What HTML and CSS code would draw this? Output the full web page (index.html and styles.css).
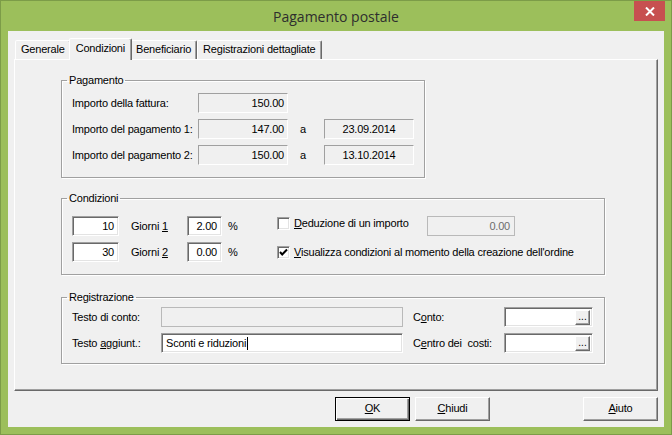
FILE: index.html
```html
<!DOCTYPE html>
<html lang="it">
<head>
<meta charset="utf-8">
<title>Pagamento postale</title>
<link rel="stylesheet" href="styles.css">
</head>
<body>
<div class="window">
  <div class="titlebar">
    <span class="title">Pagamento postale</span>
    <div class="close">
      <svg width="10" height="9" viewBox="0 0 10 9"><path d="M1 0.5 L9 8.5 M9 0.5 L1 8.5" stroke="#fff" stroke-width="2" fill="none"/></svg>
    </div>
  </div>
  <div class="client">
    <div class="tabs">
      <div class="tab">Generale</div>
      <div class="tab active">Condizioni</div>
      <div class="tab">Beneficiario</div>
      <div class="tab">Registrazioni dettagliate</div>
    </div>
    <div class="panel">
      <fieldset class="group g-pay">
        <legend>Pagamento</legend>
        <div class="body pay-body">
          <div class="row">
            <span class="lbl pay-lbl">Importo della fattura:</span>
            <span class="ro num">150.00</span>
          </div>
          <div class="row">
            <span class="lbl pay-lbl">Importo del pagamento 1:</span>
            <span class="ro num">147.00</span>
            <span class="a">a</span>
            <span class="ro date">23.09.2014</span>
          </div>
          <div class="row">
            <span class="lbl pay-lbl">Importo del pagamento 2:</span>
            <span class="ro num">150.00</span>
            <span class="a">a</span>
            <span class="ro date">13.10.2014</span>
          </div>
        </div>
      </fieldset>

      <fieldset class="group g-cond">
        <legend>Condizioni</legend>
        <div class="body cond-body">
          <div class="row">
            <span class="edit days">10</span>
            <span class="lbl giorni">Giorni <u>1</u></span>
            <span class="edit pct">2.00</span>
            <span class="lbl pctsign">%</span>
            <span class="chk chk-top"></span>
            <span class="lbl chk-lbl ded"><u>D</u>eduzione di un importo</span>
            <span class="dis dedval">0.00</span>
          </div>
          <div class="row">
            <span class="edit days">30</span>
            <span class="lbl giorni">Giorni <u>2</u></span>
            <span class="edit pct">0.00</span>
            <span class="lbl pctsign">%</span>
            <span class="chk checked">
              <svg width="9" height="9" viewBox="0 0 9 9"><path d="M1 4 L3.2 6.5 L8 1.5" stroke="#000" stroke-width="2" fill="none"/></svg>
            </span>
            <span class="lbl chk-lbl"><u>V</u>isualizza condizioni al momento della creazione dell'ordine</span>
          </div>
        </div>
      </fieldset>

      <fieldset class="group g-reg">
        <legend>Registrazione</legend>
        <div class="body reg-body">
          <div class="row">
            <span class="lbl reg-lbl">Testo di conto:</span>
            <span class="dis txt"></span>
            <span class="lbl reg-lbl2">C<u>o</u>nto:</span>
            <span class="edit pick"><span class="dots">...</span></span>
          </div>
          <div class="row">
            <span class="lbl reg-lbl">Testo <u>a</u>ggiunt.:</span>
            <span class="edit txt left">Sconti e riduzioni<span class="caret"></span></span>
            <span class="lbl reg-lbl2">C<u>e</u>ntro dei&nbsp; costi:</span>
            <span class="edit pick"><span class="dots">...</span></span>
          </div>
        </div>
      </fieldset>
    </div>
    <div class="buttons">
      <div class="btn default"><u>O</u>K</div>
      <div class="btn gap"><u>C</u>hiudi</div>
      <div class="btn"><u>A</u>iuto</div>
    </div>
  </div>
</div>
</body>
</html>
```

FILE: styles.css
```css
* { box-sizing: border-box; }

body {
  margin: 0;
  background: #ffffff;
  font-family: "Liberation Sans", Arial, sans-serif;
  font-size: 11px;
  letter-spacing: -0.2px;
  color: #000;
}

.window {
  width: 672px;
  height: 435px;
  border: 1px solid #7c9c48;
  background: #9cbf5b;
  display: flex;
  flex-direction: column;
}

.titlebar {
  height: 30px;
  position: relative;
  display: flex;
  align-items: center;
  justify-content: center;
}

.title {
  font-family: "Open Sans", "Noto Sans", sans-serif;
  font-size: 14px;
  letter-spacing: 0;
  color: #2e2e2e;
}

.close {
  position: absolute;
  top: 0;
  right: 6px;
  width: 31px;
  height: 20px;
  background: #c75050;
  display: flex;
  align-items: center;
  justify-content: center;
}

.client {
  flex: 1;
  margin: 0 7px 7px;
  background: #f0f0f0;
  padding: 7px 6px 0;
  display: flex;
  flex-direction: column;
}

/* tabs */
.tabs {
  height: 21px;
  display: flex;
  align-items: flex-end;
  padding-left: 1px;
  position: relative;
  z-index: 1;
}

.tab {
  height: 19px;
  padding: 0 5px;
  line-height: 17px;
  border: 1px solid;
  border-bottom: 0;
  border-color: #fff #696969 transparent #fff;
  border-radius: 2px 2px 0 0;
  box-shadow: inset -1px 0 #a0a0a0;
  background: #f0f0f0;
  white-space: nowrap;
}

.tab.active {
  height: 22px;
  margin: 0 -2px -1px;
  padding: 0 6px;
  line-height: 18px;
  position: relative;
  z-index: 2;
}

.panel {
  height: 332px;
  border: 1px solid;
  border-color: #fff #696969 #696969 #fff;
  box-shadow: inset -1px -1px #a0a0a0;
  padding: 14px 0 0 46px;
}

/* group boxes */
.group {
  margin: 0;
  padding: 0;
  border: 1px solid #a0a0a0;
  box-shadow: inset 1px 1px #fff, 1px 1px #fff;
  min-width: 0;
}

.group legend {
  margin-left: 5px;
  padding: 0 2px;
  line-height: 13px;
}

.g-pay { width: 364px; }
.g-cond { width: 544px; margin-top: 14px; }
.g-reg { width: 544px; margin-top: 16px; }

.body {
  display: flex;
  flex-direction: column;
  padding-left: 10px;
}

.pay-body { padding-top: 6px; padding-bottom: 12px; gap: 6px; }
.cond-body { padding-top: 11px; padding-bottom: 12px; gap: 6px; }
.reg-body { padding-top: 3px; padding-bottom: 10px; gap: 6px; }

.row {
  display: flex;
  align-items: center;
  height: 20px;
  white-space: nowrap;
}

.lbl { line-height: 13px; }

/* Pagamento */
.pay-lbl { width: 126px; }

.ro {
  height: 20px;
  width: 90px;
  line-height: 18px;
  border: 1px solid;
  border-color: #a0a0a0 #fff #fff #a0a0a0;
}

.num { text-align: right; padding-right: 3px; }
.date { text-align: center; }

.a { width: 36px; padding-left: 12px; }

/* edits */
.edit {
  height: 20px;
  line-height: 16px;
  background: #fff;
  border: 1px solid;
  border-color: #a0a0a0 #fff #fff #a0a0a0;
  box-shadow: inset 1px 1px #696969, inset -1px -1px #e3e3e3;
  text-align: right;
  padding: 1px 4px 0;
  position: relative;
}

.days { width: 47px; }
.giorni { width: 68px; padding-left: 12px; }
.pct { width: 35px; }
.pctsign { width: 55px; padding-left: 6px; }

.chk {
  width: 13px;
  height: 13px;
  flex: none;
  background: #fff;
  border: 1px solid;
  border-color: #a0a0a0 #fff #fff #a0a0a0;
  box-shadow: inset 1px 1px #696969, inset -1px -1px #e3e3e3;
  display: flex;
  align-items: center;
  justify-content: center;
}

.chk-top { align-self: flex-start; margin-top: 1px; }

.chk-lbl { padding-left: 4px; }
.ded { width: 137px; align-self: flex-start; margin-top: 1px; }

.dis {
  height: 20px;
  line-height: 18px;
  border: 1px solid #b9b9b9;
  background: #f0f0f0;
  color: #6d6d6d;
}

.dedval { width: 88px; text-align: right; padding-right: 4px; }

/* Registrazione */
.reg-lbl { width: 89px; }
.txt { width: 242px; }
.left { text-align: left; padding-left: 4px; }
.reg-lbl2 { width: 101px; padding-left: 10px; }
.pick { width: 89px; padding: 0; }

.dots {
  position: absolute;
  right: 2px;
  top: 2px;
  width: 15px;
  height: 15px;
  background: #f0f0f0;
  border: 1px solid;
  border-color: #fff #696969 #696969 #fff;
  box-shadow: inset -1px -1px #a0a0a0;
  font-size: 10px;
  line-height: 11px;
  text-align: center;
  letter-spacing: 0;
  color: #000;
}

.caret {
  display: inline-block;
  width: 1px;
  height: 13px;
  background: #000;
  vertical-align: -3px;
  margin-left: 1px;
}

/* buttons */
.buttons {
  display: flex;
  justify-content: flex-end;
  gap: 5px;
  margin-top: 6px;
}

.btn {
  width: 75px;
  height: 24px;
  line-height: 20px;
  text-align: center;
  background: #f0f0f0;
  border: 1px solid;
  border-color: #fff #696969 #696969 #fff;
  box-shadow: inset -1px -1px #a0a0a0;
}

.btn.default {
  border-color: #000;
  box-shadow: inset 1px 1px #fff, inset -1px -1px #696969, inset -2px -2px #a0a0a0;
}

.btn.gap { margin-right: 88px; }
```
